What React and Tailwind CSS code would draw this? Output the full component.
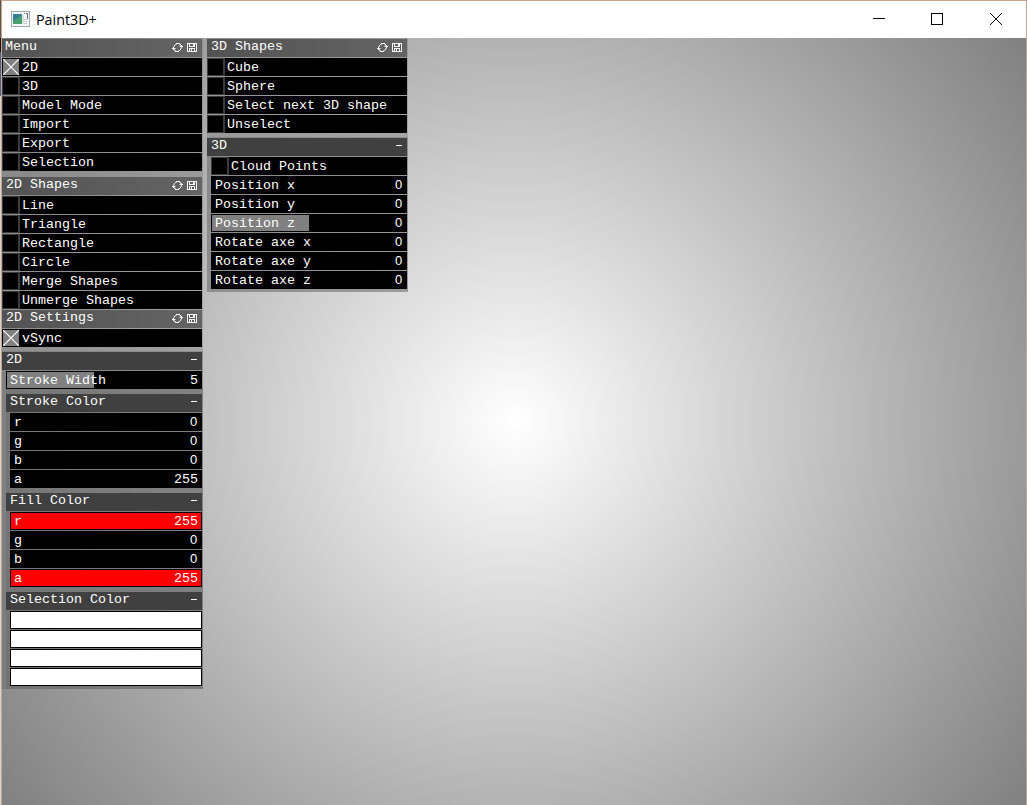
import React from "react";

const px = { shapeRendering: "crispEdges" };

function RefreshIcon() {
  return (
    <svg width="11" height="9" viewBox="0 0 11 9" style={px}>
      <path fill="#f2f2f2" d="M4 0h4v1h-4zM3 1h1v1h-1zM8 1h1v1h-1zM2 2h1v1h-1zM9 2h1v1h-1zM8 3h3v1h-3zM9 4h1v1h-1zM1 4h1v1h-1zM0 5h3v1h-3zM1 6h1v1h-1zM8 6h1v1h-1zM2 7h1v1h-1zM7 7h1v1h-1zM3 8h4v1h-4z" />
      <path fill="#b0b0b0" d="M4 1h1v1h-1zM7 1h1v1h-1zM1 3h1v1h-1zM2 3h1v1h-1zM8 2h1v1h-1zM7 3h1v1h-1zM8 5h1v1h-1zM9 5h1v1h-1zM3 5h1v1h-1zM2 6h1v1h-1zM3 7h1v1h-1zM6 7h1v1h-1z" />
    </svg>
  );
}

function SaveIcon() {
  return (
    <svg width="10" height="9" viewBox="0 0 10 9" style={px}>
      <rect width="10" height="9" fill="#f4f4f4" />
      <path fill="#5c5c5c" d="M1 1h1v7h-1zM8 1h1v7h-1zM3 1h3v2h-3zM2 4h6v1h-6zM3 6h1v2h-1zM5 6h2v2h-2z" />
    </svg>
  );
}

function PanelHeader({ title, first }) {
  return (
    <div className={`flex h-[18px] w-[200px] items-start bg-gradient-to-r from-[#535353] to-[#646464] text-white ${first ? "pl-[3px]" : "pl-[4px]"}`}>
      <span className="leading-[16px]">{title}</span>
      <span className="ml-auto flex items-center gap-[4px] pt-[4px] pr-[5px]">
        <RefreshIcon />
        <SaveIcon />
      </span>
    </div>
  );
}

function GroupHeader({ title }) {
  return (
    <div className="flex h-[18px] items-start bg-[#404040] pl-[4px]">
      <span className="leading-[16px]">{title}</span>
      <span className="mt-[7px] mr-[5px] ml-auto h-px w-[6px] bg-white" />
    </div>
  );
}

function Toggle({ label, on }) {
  return (
    <div className="flex h-[18px] items-center bg-black">
      {on ? (
        <svg className="ml-px" width="16" height="16" viewBox="0 0 16 16">
          <rect width="16" height="16" fill="#808080" />
          <path d="M0 0L16 16M16 0L0 16" stroke="#fff" strokeWidth="1.2" />
        </svg>
      ) : (
        <span className="h-[18px] w-[18px] border-t border-r-2 border-b border-l border-[#3c3c3c]" />
      )}
      <span className={on ? "pt-px pl-[3px]" : "pt-px pl-[2px]"}>{label}</span>
    </div>
  );
}

function Slider({ label, value, fill, red }) {
  return (
    <div className="flex h-[18px] items-stretch bg-black p-px">
      <div className={`flex flex-1 items-center ${red ? "bg-[#f00]" : ""}`}>
        <div className={`flex h-full items-center pt-px pl-[3px] whitespace-nowrap ${fill || ""}`}>{label}</div>
        {value === "0" ? (
          <span className="ml-auto pr-[3px] font-['Liberation_Sans',sans-serif] text-[13px] tracking-[0.7px]">0</span>
        ) : (
          <span className="ml-auto pt-px pr-[3px]">{value}</span>
        )}
      </div>
    </div>
  );
}

function Swatch() {
  return <div className="h-[18px] border border-black bg-white" />;
}

function Stack({ children, className = "" }) {
  return <div className={`flex flex-col gap-px ${className}`}>{children}</div>;
}

function ColorGroup({ title, children }) {
  return (
    <div className="mr-[-1px] ml-[4px] bg-[#505050]/20 pt-[5px] pr-px">
      <Stack>
        <GroupHeader title={title} />
        <Stack className="pl-[4px]">{children}</Stack>
      </Stack>
    </div>
  );
}

const channels = ["r", "g", "b", "a"];

export default function App() {
  return (
    <div className="flex h-[805px] w-[1027px] overflow-hidden bg-white font-['Liberation_Mono',monospace]">
      <div className="w-px shrink-0 bg-[linear-gradient(#5a5654_0,#5a5654_38px,#151515_38px,#151515_52px,#3f62a4_52px,#3f62a4_96px,#d4d4d4_96px)]" />
      <div className="flex flex-1 flex-col border-t border-r border-l border-[#cba387]">
        <header className="flex h-[37px] shrink-0 items-center bg-white">
          <svg className="mb-[2px] ml-[9px]" width="19" height="16" viewBox="0 0 19 16">
            <rect x=".5" y=".5" width="18" height="15" fill="#f3f5f7" stroke="#9ea7ae" />
            <rect x="2" y="3" width="9" height="10" fill="#347f91" />
            <path d="M2 10L11 4V13H2z" fill="#48a070" />
            <path d="M13 2.5h1M15 2.5h1M16.5 2v6" stroke="#668" />
            <path d="M12 4v9M13 8.5h3M13 10.5h3M13 12.5h3" stroke="#c5c9cc" />
          </svg>
          <span className="ml-[6px] font-['Open_Sans',sans-serif] text-[14.3px] text-black">Paint3D+</span>
          <svg className="mr-[24px] mb-[2px] ml-auto" width="129" height="14" viewBox="0 0 129 14" fill="none" stroke="#000">
            <path d="M0 6.5h12M58.5 1.5h11v11h-11z" style={px} />
            <path d="M117 1L129 13M129 1L117 13" strokeWidth="1" />
          </svg>
        </header>
        <main className="flex flex-1 items-start gap-[4px] bg-[radial-gradient(circle_640px_at_512px_384px,#fff,#808080)] text-[13.33px] leading-[18px] text-white">
          <div className="flex h-[651px] w-[201px] flex-col bg-[#808080]/45 pt-px pr-px">
            <Stack>
              <PanelHeader title="Menu" first />
              <Toggle label="2D" on />
              <Toggle label="3D" />
              <Toggle label="Model Mode" />
              <Toggle label="Import" />
              <Toggle label="Export" />
              <Toggle label="Selection" />
            </Stack>
            <Stack className="mt-[6px]">
              <PanelHeader title="2D Shapes" />
              <Toggle label="Line" />
              <Toggle label="Triangle" />
              <Toggle label="Rectangle" />
              <Toggle label="Circle" />
              <Toggle label="Merge Shapes" />
              <Toggle label="Unmerge Shapes" />
              <PanelHeader title="2D Settings" />
              <Toggle label="vSync" on />
            </Stack>
            <div className="mt-[4px] mr-[-1px] flex-1 bg-[#606060]/30 pt-px pr-px">
              <Stack>
                <GroupHeader title="2D" />
                <div className="pl-[4px]">
                  <Slider label="Stroke Width" value="5" fill="w-[87px] bg-[#808080]" />
                </div>
              </Stack>
              <ColorGroup title="Stroke Color">
                {channels.map((c) => (
                  <Slider key={c} label={c} value={c === "a" ? "255" : "0"} />
                ))}
              </ColorGroup>
              <ColorGroup title="Fill Color">
                {channels.map((c) => {
                  const full = c === "r" || c === "a";
                  return <Slider key={c} label={c} value={full ? "255" : "0"} red={full} />;
                })}
              </ColorGroup>
              <ColorGroup title="Selection Color">
                {channels.map((c) => (
                  <Swatch key={c} />
                ))}
                <div className="h-[2px]" />
              </ColorGroup>
            </div>
          </div>
          <div className="flex h-[254px] w-[201px] flex-col bg-[#808080]/45 pt-px pr-px">
            <Stack>
              <PanelHeader title="3D Shapes" />
              <Toggle label="Cube" />
              <Toggle label="Sphere" />
              <Toggle label="Select next 3D shape" />
              <Toggle label="Unselect" />
            </Stack>
            <div className="mt-[4px] mr-[-1px] flex-1 bg-[#606060]/30 pt-px pr-px">
              <Stack>
                <GroupHeader title="3D" />
                <Stack className="pl-[4px]">
                  <Toggle label="Cloud Points" />
                  <Slider label="Position x" value="0" />
                  <Slider label="Position y" value="0" />
                  <Slider label="Position z" value="0" fill="w-[97px] bg-[#808080]" />
                  <Slider label="Rotate axe x" value="0" />
                  <Slider label="Rotate axe y" value="0" />
                  <Slider label="Rotate axe z" value="0" />
                </Stack>
              </Stack>
            </div>
          </div>
        </main>
      </div>
    </div>
  );
}
